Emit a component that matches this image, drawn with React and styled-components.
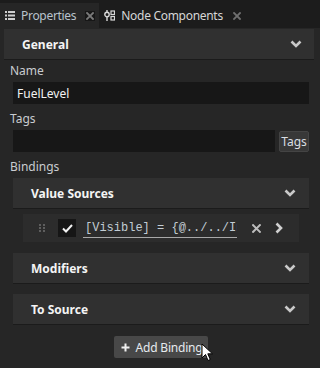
import React from 'react'
import styled, { createGlobalStyle } from 'styled-components'

const GlobalStyle = createGlobalStyle`
  html, body {
    margin: 0;
    padding: 0;
    background: #262626;
  }
  body {
    font-family: "Noto Sans", "Open Sans", sans-serif;
    font-size: 12px;
    color: #cfcfcf;
  }
`;

const ListIcon = () => (
  <svg width="10" height="9" viewBox="0 0 10 9">
    <rect x="0" y="0" width="2" height="2" fill="#d0d0d0" />
    <rect x="3" y="0" width="7" height="2" fill="#d0d0d0" />
    <rect x="0" y="3.5" width="2" height="2" fill="#d0d0d0" />
    <rect x="3" y="3.5" width="7" height="2" fill="#d0d0d0" />
    <rect x="0" y="7" width="2" height="2" fill="#d0d0d0" />
    <rect x="3" y="7" width="7" height="2" fill="#d0d0d0" />
  </svg>
);

const NodeIcon = () => (
  <svg width="11" height="11" viewBox="0 0 11 11">
    <circle cx="3" cy="4.5" r="2.2" fill="none" stroke="#d8d8d8" strokeWidth="1.4" />
    <line x1="3" y1="7" x2="3" y2="11" stroke="#d8d8d8" strokeWidth="1.4" />
    <line x1="3" y1="0" x2="3" y2="2" stroke="#d8d8d8" strokeWidth="1.4" />
    <rect x="7" y="1" width="3.5" height="3.5" fill="none" stroke="#d8d8d8" strokeWidth="1.2" />
    <rect x="7" y="6.5" width="3.5" height="3.5" fill="none" stroke="#d8d8d8" strokeWidth="1.2" />
  </svg>
);

const CloseIcon = ({ color = '#8a8a8a', size = 8 }) => (
  <svg width={size} height={size} viewBox="0 0 8 8">
    <path d="M1 1 L7 7 M7 1 L1 7" stroke={color} strokeWidth="1.8" strokeLinecap="square" />
  </svg>
);

const ChevronDown = () => (
  <svg width="12" height="8" viewBox="0 0 12 8">
    <polyline points="1.5,1.5 6,6 10.5,1.5" fill="none" stroke="#c9c9c9" strokeWidth="2.6" />
  </svg>
);

const ChevronRight = () => (
  <svg width="8" height="12" viewBox="0 0 8 12">
    <polyline points="1.5,1.5 6,6 1.5,10.5" fill="none" stroke="#d0d0d0" strokeWidth="2.6" />
  </svg>
);

const CheckIcon = () => (
  <svg width="11" height="9" viewBox="0 0 11 9">
    <polyline points="1,4.5 4,7.5 10,1" fill="none" stroke="#f2f2f2" strokeWidth="2" />
  </svg>
);

const DragDots = () => (
  <svg width="6" height="8" viewBox="0 0 6 8">
    {[0, 3, 6].map(y => (
      <React.Fragment key={y}>
        <rect x="0" y={y} width="2" height="2" fill="#5e5e5e" />
        <rect x="4" y={y} width="2" height="2" fill="#5e5e5e" />
      </React.Fragment>
    ))}
  </svg>
);

const PlusIcon = () => (
  <svg width="9" height="9" viewBox="0 0 9 9">
    <path d="M4.5 0.5 V8.5 M0.5 4.5 H8.5" stroke="#f0f0f0" strokeWidth="2" />
  </svg>
);

const Cursor = () => (
  <svg width="13" height="19" viewBox="0 0 13 19">
    <path d="M1 1 L1 15 L4.5 11.5 L7 17.5 L9.3 16.5 L6.8 10.8 L11.5 10.8 Z"
      fill="#ffffff" stroke="#000000" strokeWidth="1" strokeLinejoin="round" />
  </svg>
);

const Section = ({ title, children }) => (
  <div>
    <SectionHeader>
      <span>{title}</span>
      <ChevronDown />
    </SectionHeader>
    {children}
  </div>
);

const SubSection = ({ title, children }) => (
  <div>
    <SubHeader>
      <span>{title}</span>
      <ChevronDown />
    </SubHeader>
    {children}
  </div>
);

const App = () => {
  return (
    <>
      <GlobalStyle />
      <Window>
        <TabBar>
          <Tab $active>
            <ListIcon />
            <TabLabel>Properties</TabLabel>
            <TabClose $active><CloseIcon color="#7a7a7a" /></TabClose>
          </Tab>
          <Tab>
            <NodeIcon />
            <TabLabel>Node Components</TabLabel>
            <TabClose><CloseIcon color="#6f6f6f" /></TabClose>
          </Tab>
        </TabBar>

        <Content>
          <Section title="General">
            <Body>
              <Label $first>Name</Label>
              <Input>FuelLevel</Input>
              <Label>Tags</Label>
              <TagsRow>
                <Input $grow />
                <SmallButton>Tags</SmallButton>
              </TagsRow>
              <Label>Bindings</Label>
              <SubList>
                <SubSection title="Value Sources">
                  <BindingRow>
                    <Handle><DragDots /></Handle>
                    <Checkbox><CheckIcon /></Checkbox>
                    <Expression>[Visible] = {'{'}@../../InstrumentCluster/FuelLevel{'}'}</Expression>
                    <RowAction $pad="15px"><CloseIcon color="#bdbdbd" size={9} /></RowAction>
                    <RowAction $pad="14px"><ChevronRight /></RowAction>
                  </BindingRow>
                </SubSection>
                <SubSection title="Modifiers" />
                <SubSection title="To Source" />
              </SubList>
              <Footer>
                <AddButton>
                  <PlusIcon />
                  <span>Add Binding</span>
                  <CursorSpot><Cursor /></CursorSpot>
                </AddButton>
              </Footer>
            </Body>
          </Section>
        </Content>
      </Window>
    </>
  );
}

const Window = styled.div`
  width: 320px;
  height: 368px;
  display: flex;
  flex-direction: column;
  background: #262626;
  overflow: hidden;
`;

const TabBar = styled.div`
  height: 28px;
  flex: none;
  display: flex;
  align-items: flex-end;
  background: #1c1c1c;
`;

const Tab = styled.div`
  height: 25px;
  display: flex;
  align-items: center;
  padding: 0 0 0 5px;
  gap: 6px;
  background: ${p => p.$active ? '#262626' : 'transparent'};
  color: ${p => p.$active ? '#b9c3cc' : '#d6d6d6'};
  font-size: 12px;
`;

const TabLabel = styled.span`
  line-height: 16px;
  letter-spacing: -0.3px;
`;

const TabClose = styled.span`
  width: 10px;
  height: 10px;
  display: flex;
  align-items: center;
  justify-content: center;
  margin: 0 4px 0 3px;
  background: ${p => p.$active ? '#171717' : 'transparent'};
`;

const Content = styled.div`
  flex: 1;
  padding: 1px 6px 0 4px;
`;

const SectionHeader = styled.div`
  height: 30px;
  display: flex;
  align-items: center;
  justify-content: space-between;
  padding: 0 12px 0 18px;
  background: #303030;
  border-bottom: 1px solid #1b1b1b;
  color: #f4f4f4;
  font-weight: 700;
  font-size: 12px;
`;

const Body = styled.div`
  display: flex;
  flex-direction: column;
  padding: 0 5px 0 6px;
`;

const Label = styled.div`
  line-height: 16px;
  margin: ${p => p.$first ? '3px' : '7px'} 0 3px;
  color: #c9ccd0;
`;

const Input = styled.div`
  flex: ${p => p.$grow ? 1 : 'none'};
  height: 22px;
  margin-left: 3px;
  padding: 0 4px;
  display: flex;
  align-items: center;
  background: #171717;
  color: #f2f2f2;
`;

const TagsRow = styled.div`
  display: flex;
  gap: 4px;
`;

const SmallButton = styled.div`
  width: 30px;
  height: 21px;
  margin-top: 1px;
  display: flex;
  align-items: center;
  justify-content: center;
  background: #383838;
  border: 1px solid #444;
  border-radius: 2px;
  box-sizing: border-box;
  color: #d9dfe4;
`;

const SubList = styled.div`
  display: flex;
  flex-direction: column;
  gap: 10px;
  margin-left: 3px;
`;

const SubHeader = styled.div`
  height: 30px;
  display: flex;
  align-items: center;
  justify-content: space-between;
  padding: 0 13px 0 18px;
  background: #303030;
  border-bottom: 1px solid #1b1b1b;
  color: #f4f4f4;
  font-weight: 700;
`;

const BindingRow = styled.div`
  height: 28px;
  margin: 5px 10px 1px 10px;
  display: flex;
  align-items: center;
  background: #2c2c2c;
`;

const Handle = styled.div`
  width: 33px;
  display: flex;
  justify-content: center;
  padding-left: 2px;
`;

const Checkbox = styled.div`
  width: 18px;
  height: 18px;
  display: flex;
  align-items: center;
  justify-content: center;
  background: #161616;
`;

const Expression = styled.div`
  width: 152px;
  margin-left: 7px;
  padding-left: 2px;
  overflow: hidden;
  white-space: nowrap;
  font-family: "Liberation Mono", "Courier New", monospace;
  font-size: 12px;
  line-height: 18px;
  color: #c2ccd4;
  border-bottom: 1px solid #a8a8a8;
`;

const RowAction = styled.div`
  display: flex;
  align-items: center;
  margin-left: ${p => p.$pad};
`;

const Footer = styled.div`
  display: flex;
  justify-content: center;
  padding-top: 11px;
  margin-left: 3px;
`;

const AddButton = styled.div`
  position: relative;
  height: 22px;
  padding: 0 6px 0 7px;
  display: flex;
  align-items: center;
  gap: 6px;
  background: #484848;
  border-radius: 2px;
  color: #e6eaee;
  letter-spacing: -0.2px;
`;

const CursorSpot = styled.div`
  position: absolute;
  left: 87px;
  top: 7px;
`;

export default App
